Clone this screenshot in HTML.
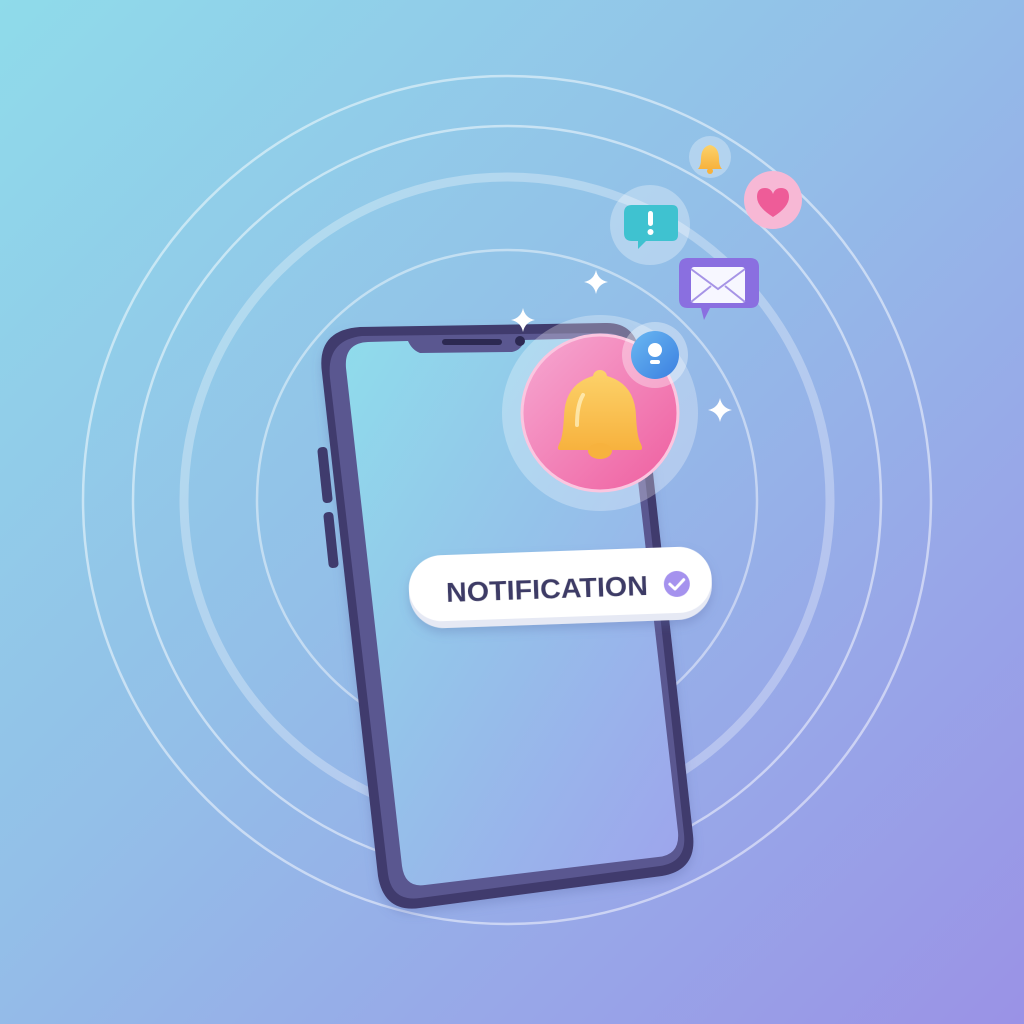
<!DOCTYPE html>
<html><head><meta charset="utf-8"><style>
html,body{margin:0;padding:0}
body{width:1024px;height:1024px;overflow:hidden;background:linear-gradient(135deg,#8fdbea 0%,#93bfe8 45%,#98a6e8 75%,#9a92e6 100%);position:relative;font-family:"Liberation Sans",sans-serif}
svg{position:absolute;left:0;top:0}
</style></head><body>
<svg width="1024" height="1024" viewBox="0 0 1024 1024">
<defs>
<linearGradient id="scr" x1="0" y1="0" x2="1" y2="1"><stop offset="0" stop-color="#8fdceb"/><stop offset="0.5" stop-color="#95c0ea"/><stop offset="1" stop-color="#9ea4ec"/></linearGradient>
<linearGradient id="pink" x1="0" y1="0" x2="1" y2="1"><stop offset="0" stop-color="#f6a9d2"/><stop offset="1" stop-color="#ef5e9f"/></linearGradient>
<linearGradient id="gold" x1="0" y1="0" x2="0" y2="1"><stop offset="0" stop-color="#fcd26a"/><stop offset="1" stop-color="#f7b23e"/></linearGradient>
<linearGradient id="blue" x1="0" y1="0" x2="1" y2="1"><stop offset="0" stop-color="#6ab8f2"/><stop offset="1" stop-color="#3b7fe0"/></linearGradient>
<filter id="sh" x="-20%" y="-20%" width="140%" height="160%"><feDropShadow dx="0" dy="5" stdDeviation="5" flood-color="#5a6aa8" flood-opacity="0.3"/></filter>
</defs>
<g fill="none" stroke="#ffffff">
<circle cx="507" cy="500" r="424" stroke-opacity="0.5" stroke-width="2.5"/>
<circle cx="507" cy="500" r="374" stroke-opacity="0.5" stroke-width="2.5"/>
<circle cx="507" cy="500" r="323" stroke-opacity="0.3" stroke-width="9"/>
<circle cx="507" cy="500" r="250" stroke-opacity="0.45" stroke-width="2.5"/>
</g>
<!-- phone -->
<path d="M322 373 Q316 330 360 327 L605 323 Q636 322 640 355 L693 835 Q697 870 662 876 L420 908 Q384 913 378 876 Z" fill="#3f3b6d" filter="url(#sh)"/>
<path d="M330 378 Q326 340 362 336 L603 333 Q629 332 632 358 L684 834 Q687 862 660 866 L420 898 Q392 902 388 874 Z" fill="#5a5790"/>
<path d="M346 368 Q344 343 368 342 L408 341 Q412 350 420 353 L512 352 Q522 350 524 340 L602 338 Q622 338 624 358 L678 832 Q680 855 658 857 L425 885 Q405 888 402 866 Z" fill="url(#scr)"/>
<rect x="442" y="339" width="60" height="6" rx="3" fill="#2c2952"/>
<circle cx="520" cy="341" r="5" fill="#2c2952"/>
<rect x="320" y="447" width="10" height="56" rx="4" fill="#3f3b6d" transform="rotate(-6 325 475)"/>
<rect x="326" y="512" width="10" height="56" rx="4" fill="#3f3b6d" transform="rotate(-6 331 540)"/>
<!-- bell bubble -->
<circle cx="600" cy="413" r="98" fill="#ffffff" fill-opacity="0.28"/>
<circle cx="600" cy="413" r="78" fill="url(#pink)" stroke="#fbc6e0" stroke-width="3"/>
<path d="M600 370 a7 7 0 0 1 7 6 q28 8 29 40 q1 20 4 26 q4 8 0 8 l-80 0 q-4 0 0-8 q3-6 4-26 q1-32 29-40 a7 7 0 0 1 7-6z" fill="url(#gold)"/>
<ellipse cx="600" cy="451" rx="12" ry="8" fill="#f7b23e"/>
<path d="M583 395 q-6 10 -6 30" stroke="#fff3c8" stroke-width="4" stroke-linecap="round" fill="none" opacity="0.7"/>
<circle cx="655" cy="355" r="33" fill="#ffffff" fill-opacity="0.35"/>
<circle cx="655" cy="355" r="24" fill="url(#blue)"/>
<circle cx="655" cy="350" r="7" fill="#fff"/>
<rect x="650" y="360" width="10" height="4" rx="2" fill="#fff"/>
<!-- small icons -->
<circle cx="710" cy="157" r="21" fill="#fff" fill-opacity="0.3"/>
<path d="M710 145 q9 2 9 14 q0 7 3 10 l-24 0 q3-3 3-10 q0-12 9-14z" fill="url(#gold)"/><circle cx="710" cy="171" r="3" fill="#f7b23e"/>
<circle cx="773" cy="200" r="29" fill="#f7b8d5"/>
<path d="M773 217 q-16-10 -16-20 q0-9 8-9 q6 0 8 6 q2-6 8-6 q8 0 8 9 q0 10 -16 20z" fill="#ee5c98"/>
<circle cx="650" cy="225" r="40" fill="#fff" fill-opacity="0.3"/>
<path d="M632 205 h40 q6 0 6 6 v24 q0 6 -6 6 h-26 l-8 8 v-8 h-6 q-8 0 -8-8 v-20 q0-8 8-8z" fill="#3fc2d0"/>
<rect x="648" y="211" width="5" height="15" rx="2.5" fill="#fff"/><circle cx="650.5" cy="232" r="3" fill="#fff"/>
<path d="M688 258 h62 q9 0 9 9 v32 q0 9 -9 9 h-40 l-6 12 -3-12 h-13 q-9 0 -9-9 v-32 q0-9 9-9z" fill="#8a6fe0"/>
<rect x="691" y="267" width="54" height="36" rx="3" fill="#f7f7ff"/>
<path d="M691 269 l27 20 27-20 M691 302 l20-16 M745 302 l-20-16" stroke="#a694e6" stroke-width="2" fill="none"/>
<!-- sparkles -->
<g fill="#fff">
<path d="M596 270 q2 10 12 12 q-10 2 -12 12 q-2-10 -12-12 q10-2 12-12z"/>
<path d="M523 308 q2 10 12 12 q-10 2 -12 12 q-2-10 -12-12 q10-2 12-12z"/>
<path d="M720 398 q2 10 12 12 q-10 2 -12 12 q-2-10 -12-12 q10-2 12-12z"/>
</g>
<!-- pill -->
<g transform="rotate(-2 561 590)" filter="url(#sh)">
<rect x="409" y="554" width="303" height="70" rx="35" fill="#e6e9f4"/>
<rect x="409" y="551" width="303" height="66" rx="33" fill="#ffffff"/>
<text x="446" y="598" font-family="Liberation Sans, sans-serif" font-weight="bold" font-size="28" textLength="202" lengthAdjust="spacingAndGlyphs" fill="#3d3a66">NOTIFICATION</text>
<circle cx="677" cy="588" r="13" fill="#a592ee"/>
<path d="M670 588 l5 5 9-9" stroke="#fff" stroke-width="3" fill="none" stroke-linecap="round" stroke-linejoin="round"/>
</g>
</svg>
</body></html>
